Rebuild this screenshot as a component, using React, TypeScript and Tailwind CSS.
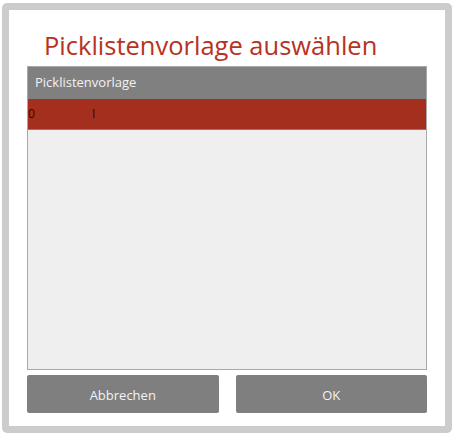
export default function App() {
  return (
    <div className="w-[455px] h-[435px] bg-white pl-[2px] pt-[3px] font-['Open_Sans','Noto_Sans',sans-serif]">
      <div className="w-[450px] h-[430px] border-[7px] border-[#cccccc] rounded-[5px] bg-white flex flex-col px-[18px] pb-[13px]">
        <h1 className="h-[56px] pt-[19px] pl-[17px] text-[25.5px] leading-[32px] text-[#b83222] whitespace-nowrap">
          Picklistenvorlage auswählen
        </h1>
        <div className="flex-1 flex flex-col border border-[#a8a8a8] bg-[#efefef]">
          <div className="h-[32px] flex items-center bg-[#808080] px-[7px] text-[13px] text-[#f2f2f2]">
            Picklistenvorlage
          </div>
          <div className="h-[31px] flex items-center bg-[#a52f1f] border-b border-[#c9615a] text-[12px] text-[#2a0a06]">
            <span className="w-[64px]">0</span>
            <span>I</span>
          </div>
        </div>
        <div className="mt-[5px] grid grid-cols-2 gap-[17px]">
          <button className="h-[38px] pt-[3px] bg-[#7f7f7f] rounded-[2px] text-[13px] text-[#f2f2f2]">Abbrechen</button>
          <button className="h-[38px] pt-[3px] bg-[#7f7f7f] rounded-[2px] text-[13px] text-[#f2f2f2]">OK</button>
        </div>
      </div>
    </div>
  );
}
